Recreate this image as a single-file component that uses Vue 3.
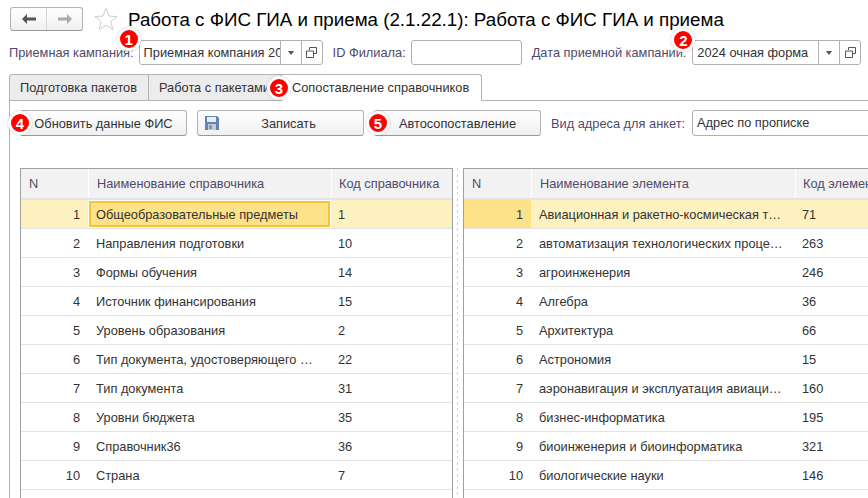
<script setup>
const leftRows = [
  [1, 'Общеобразовательные предметы', '1'],
  [2, 'Направления подготовки', '10'],
  [3, 'Формы обучения', '14'],
  [4, 'Источник финансирования', '15'],
  [5, 'Уровень образования', '2'],
  [6, 'Тип документа, удостоверяющего личность', '22'],
  [7, 'Тип документа', '31'],
  [8, 'Уровни бюджета', '35'],
  [9, 'Справочник36', '36'],
  [10, 'Страна', '7'],
]

const rightRows = [
  [1, 'Авиационная и ракетно-космическая техника', '71'],
  [2, 'автоматизация технологических процессов', '263'],
  [3, 'агроинженерия', '246'],
  [4, 'Алгебра', '36'],
  [5, 'Архитектура', '66'],
  [6, 'Астрономия', '15'],
  [7, 'аэронавигация и эксплуатация авиационной', '160'],
  [8, 'бизнес-информатика', '195'],
  [9, 'биоинженерия и биоинформатика', '321'],
  [10, 'биологические науки', '146'],
]
</script>

<template>
  <div class="page">
    <header class="head">
      <div class="nav">
        <button type="button" class="nav-btn">
          <svg width="16" height="12" viewBox="0 0 16 12"><path d="M1 6l5-5v3.500h9v3H6V11z" fill="#555" /></svg>
        </button>
        <button type="button" class="nav-btn">
          <svg width="16" height="12" viewBox="0 0 16 12"><path d="M15 6l-5-5v3.500H1v3h9V11z" fill="#aaa" /></svg>
        </button>
      </div>
      <svg class="star" width="24" height="24" viewBox="0 0 24 24">
        <path d="M12 1.500l3 7.500 8 .6-6.200 5.100 2 7.800L12 18.200l-6.800 4.300 2-7.800L1 9.600 9 9z" fill="#fff" stroke="#ccc" />
      </svg>
      <h1 class="title">Работа с ФИС ГИА и приема (2.1.22.1): Работа с ФИС ГИА и приема</h1>
    </header>

    <div class="filters">
      <label class="lbl">Приемная кампания:</label>
      <div class="field field-campaign">
        <span class="field-text">Приемная компания 2024</span>
        <span class="field-btn"><i class="caret"></i></span>
        <span class="field-btn">
          <svg width="11" height="11" viewBox="0 0 11 11"><path d="M3.500 3V.5h7v6H8M.5 4h7v6.500h-7z" fill="none" stroke="#555" /></svg>
        </span>
        <span class="badge badge-1">1</span>
      </div>
      <label class="lbl lbl-id">ID Филиала:</label>
      <div class="field field-id"></div>
      <label class="lbl lbl-date">Дата приемной кампании:</label>
      <div class="field field-date">
        <span class="field-text">2024 очная форма</span>
        <span class="field-btn"><i class="caret"></i></span>
        <span class="field-btn">
          <svg width="11" height="11" viewBox="0 0 11 11"><path d="M3.500 3V.5h7v6H8M.5 4h7v6.500h-7z" fill="none" stroke="#555" /></svg>
        </span>
        <span class="badge badge-2">2</span>
      </div>
    </div>

    <div class="tabs">
      <div class="tab tab-a">Подготовка пакетов</div>
      <div class="tab tab-b">Работа с пакетами</div>
      <div class="tab tab-c is-active">
        Сопоставление справочников
        <span class="badge badge-3">3</span>
      </div>
      <div class="tabs-rest"></div>
    </div>

    <section class="panel">
      <div class="toolbar">
        <button type="button" class="btn">
          Обновить данные ФИС
          <span class="badge badge-4">4</span>
        </button>
        <button type="button" class="btn btn-save">
          <svg class="save-ico" width="14" height="14" viewBox="0 0 14 14">
            <path d="M0 0h12l2 2v12H0z" fill="#5f86b3" />
            <path d="M2 1h9v5H2z" fill="#e8eef5" />
            <path d="M3 8h8v6H3z" fill="#c9c9c9" />
            <path d="M4.500 9h2v4h-2z" fill="#5f86b3" />
          </svg>
          Записать
        </button>
        <button type="button" class="btn">
          Автосопоставление
          <span class="badge badge-5">5</span>
        </button>
        <label class="lbl">Вид адреса для анкет:</label>
        <div class="field field-addr"><span class="field-text">Адрес по прописке</span></div>
      </div>

      <div class="tables">
        <div class="grid grid-left">
          <div class="row row-head">
            <div class="cell c-n c-head-n">N</div>
            <div class="cell c-name">Наименование справочника</div>
            <div class="cell c-code">Код справочника</div>
          </div>
          <div v-for="(r, i) in leftRows" :key="r[0]" class="row" :class="{ 'is-current': i === 0 }">
            <div class="cell c-n">{{ r[0] }}</div>
            <div class="cell c-name" :class="{ 'is-focus': i === 0 }"><span class="clip">{{ r[1] }}</span></div>
            <div class="cell c-code">{{ r[2] }}</div>
          </div>
          <div class="row row-empty"></div>
        </div>

        <div class="splitter"></div>

        <div class="grid grid-right">
          <div class="row row-head">
            <div class="cell c-n c-head-n">N</div>
            <div class="cell c-name">Наименование элемента</div>
            <div class="cell c-code">Код элемента</div>
          </div>
          <div v-for="(r, i) in rightRows" :key="r[0]" class="row" :class="{ 'is-current': i === 0 }">
            <div class="cell c-n" :class="{ 'is-mark': i === 0 }">{{ r[0] }}</div>
            <div class="cell c-name"><span class="clip">{{ r[1] }}</span></div>
            <div class="cell c-code">{{ r[2] }}</div>
          </div>
          <div class="row row-empty"></div>
        </div>
      </div>
    </section>
  </div>
</template>

<style>
html,
body {
  margin: 0;
  overflow: hidden;
  background: #fff;
}
</style>

<style scoped>
.page {
  width: 868px;
  height: 498px;
  overflow: hidden;
  font-family: 'Liberation Sans', Arial, sans-serif;
  font-size: 12.8px;
  color: #333;
  background: #fff;
}

.head {
  display: flex;
  align-items: center;
  height: 40px;
  padding: 0 0 2px 10px;
  box-sizing: border-box;
}

.nav {
  display: flex;
  width: 73px;
  height: 24px;
  box-sizing: border-box;
  border: 1px solid #b4b4b4;
  border-bottom-color: #999;
  border-radius: 3px;
  background: linear-gradient(#fff, #f0f0f0);
}

.nav-btn {
  flex: 1;
  display: grid;
  place-items: center;
  padding: 0;
  border: none;
  background: none;
}

.nav-btn + .nav-btn {
  border-left: 1px solid #d5d5d5;
}

.star {
  margin-left: 11px;
  flex: none;
}

.title {
  margin: 2px 0 0 10px;
  font-size: 18.75px;
  font-weight: 400;
  color: #000;
  white-space: nowrap;
}

.filters {
  display: flex;
  align-items: center;
  height: 25px;
  padding-left: 9px;
}

.lbl {
  color: #4f4a6b;
  white-space: nowrap;
}

.field {
  position: relative;
  display: flex;
  align-items: stretch;
  height: 25px;
  box-sizing: border-box;
  border: 1px solid #b0b0b0;
  border-radius: 3px;
  background: #fff;
  color: #333;
}

.field-text {
  flex: 1;
  min-width: 0;
  padding-left: 4px;
  line-height: 24px;
  overflow: hidden;
  white-space: nowrap;
}

.field-btn {
  flex: none;
  display: grid;
  place-items: center;
  width: 20px;
  border-left: 1px solid #b0b0b0;
}

.caret {
  width: 0;
  height: 0;
  border: 3px solid transparent;
  border-top: 4px solid #555;
  border-bottom: 0;
}

.field-campaign {
  flex: none;
  width: 184px;
  margin-left: 5px;
}

.lbl-id {
  margin-left: 10px;
}

.field-id {
  flex: none;
  width: 111px;
  margin-left: 5px;
}

.lbl-date {
  margin-left: 10px;
}

.field-date {
  flex: none;
  width: 169px;
  margin-left: 6px;
}

.tabs {
  display: flex;
  height: 27px;
  margin-top: 9px;
  padding-left: 9px;
}

.tab {
  position: relative;
  box-sizing: border-box;
  height: 27px;
  padding-left: 10px;
  line-height: 26px;
  white-space: nowrap;
  border: 1px solid #b4b4b4;
  border-right: none;
  background: #ececec;
  color: #333;
}

.tab-a {
  width: 139px;
  border-radius: 3px 0 0 0;
}

.tab-b {
  width: 133px;
}

.tab-c {
  width: 201px;
  border-right: 1px solid #b4b4b4;
  border-bottom: none;
  border-radius: 0 3px 0 0;
  background: #fff;
}

.tabs-rest {
  flex: 1;
  border-bottom: 1px solid #b4b4b4;
}

.panel {
  height: 400px;
  margin-left: 9px;
  border-left: 1px solid #b4b4b4;
}

.toolbar {
  display: flex;
  align-items: center;
  height: 26px;
  padding: 9px 0 0 10px;
}

.btn {
  position: relative;
  flex: none;
  width: 167px;
  height: 26px;
  margin-right: 10px;
  padding: 1px 0 0;
  font: inherit;
  color: #333;
  border: 1px solid #b4b4b4;
  border-bottom-color: #999;
  border-radius: 3px;
  background: linear-gradient(#fff, #f0f0f0);
}

.btn-save {
  padding-left: 16px;
}

.save-ico {
  position: absolute;
  left: 7px;
  top: 5px;
}

.field-addr {
  flex: none;
  width: 190px;
  height: 26px;
  margin-left: 7px;
}

.tables {
  display: flex;
  margin: 32px 0 0 10px;
}

.grid {
  flex: none;
  box-sizing: border-box;
  height: 340px;
  border: 1px solid #a0a0a0;
  border-bottom: none;
}

.grid-left {
  width: 433px;
}

.grid-right {
  width: 420px;
  border-right: none;
}

.splitter {
  flex: none;
  width: 1px;
  margin: 0 5px 0 4px;
  background: repeating-linear-gradient(#d4d4d4 0 3px, transparent 3px 6px);
}

.row {
  display: flex;
  height: 29px;
  box-sizing: border-box;
  border-bottom: 1px solid #e3e3e3;
}

.row-head {
  height: 31px;
  background: #f2f2f2;
  border-bottom: 2px solid #e3e3e3;
  color: #4f4a6b;
}

.row-head .cell + .cell {
  border-left: 1px solid #fff;
}

.row-empty {
  border: none;
}

.is-current {
  background: #fdf1c0;
}

.cell {
  flex: none;
  box-sizing: border-box;
  height: 100%;
  padding: 0 8px;
  line-height: 30px;
  white-space: nowrap;
  overflow: hidden;
}

.c-n {
  width: 67px;
  text-align: right;
}

.c-head-n {
  text-align: left;
}

.c-name {
  width: 243px;
  padding-right: 13px;
}

.c-code {
  width: 121px;
  padding-left: 7px;
  padding-right: 0;
}

.grid-right .c-name {
  width: 264px;
  padding-right: 10px;
}

.clip {
  display: block;
  overflow: hidden;
  text-overflow: ellipsis;
}

.is-focus {
  background: #fde28a;
  box-shadow: inset 0 0 0 1px #fff, inset 0 0 0 3px #f8c52e;
}

.is-mark {
  background: #fde28a;
}

.badge {
  position: absolute;
  z-index: 2;
  display: grid;
  place-items: center;
  width: 18px;
  height: 18px;
  border-radius: 50%;
  background: #f00;
  border: 3px solid #fff;
  color: #fff;
  font-family: 'Liberation Sans', Arial, sans-serif;
  font-size: 15px;
  font-weight: 700;
  line-height: 1;
  box-shadow: 0 0 2px rgba(0, 0, 0, 0.25);
  box-sizing: content-box;
}

.badge-1 {
  left: -23px;
  top: -14px;
}

.badge-2 {
  left: -22px;
  top: -13px;
}

.badge-3 {
  left: -15px;
  top: 1px;
}

.badge-4 {
  left: -13px;
  top: 0;
}

.badge-5 {
  left: -9px;
  top: 0;
}
</style>
